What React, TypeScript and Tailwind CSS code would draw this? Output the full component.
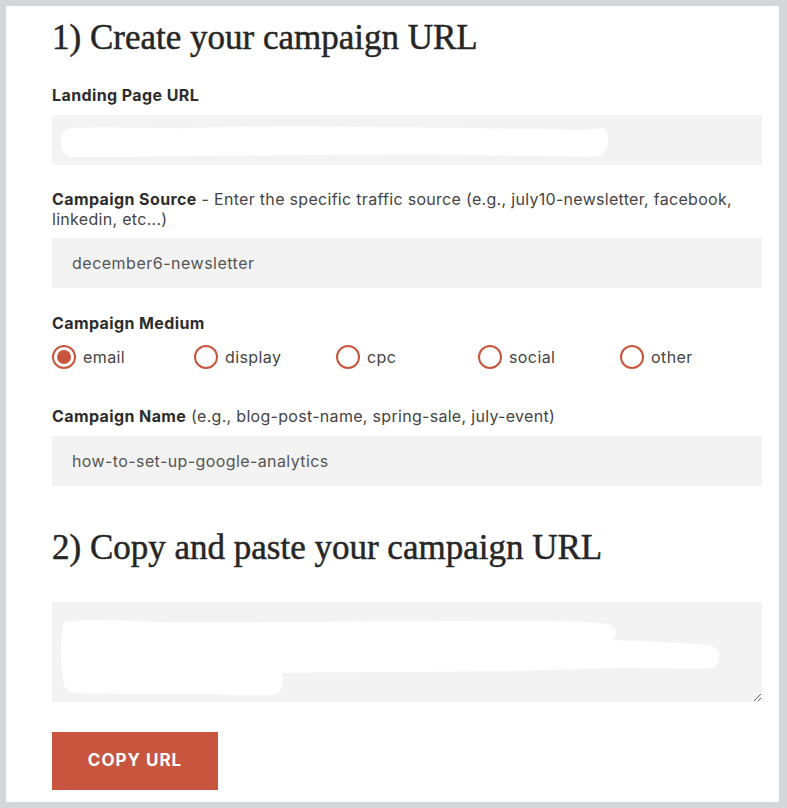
import React from "react";

const serif = { fontFamily: '"Liberation Serif", "DejaVu Serif", serif' };
const sans = { fontFamily: 'Inter, "Open Sans", sans-serif' };

function Label({ bold, rest }: { bold: string; rest?: string }) {
  return (
    <div className="text-[16px] leading-[20px] text-[#444]" style={sans}>
      <span className="font-bold tracking-[0.4px] text-[#2d2d2d]">{bold}</span>
      {rest ? <span className="font-normal tracking-[0.3px]">{rest}</span> : null}
    </div>
  );
}

function Radio({ label, checked }: { label: string; checked?: boolean }) {
  return (
    <div className="flex items-center gap-[7px]">
      <span className="flex h-[24px] w-[24px] items-center justify-center rounded-full border-2 border-[#c8553d] bg-white">
        {checked ? <span className="h-[14px] w-[14px] rounded-full bg-[#c8553d]" /> : null}
      </span>
      <span className="text-[16px] leading-[20px] tracking-[0.4px] text-[#444]" style={sans}>{label}</span>
    </div>
  );
}

export default function App() {
  return (
    <div className="min-h-[808px] w-full bg-[#d4d7da] pb-[6px] pl-[6px] pr-[8px] pt-[6px]">
      <div className="bg-white pb-[12px] pl-[46px] pr-[17px] pt-[12px]">
        <h1
          className="text-[35px] leading-[40px] text-[#262626] [-webkit-text-stroke:0.5px_#262626]"
          style={serif}
        >
          1) Create your campaign URL
        </h1>

        <div className="mt-[27px]">
          <Label bold="Landing Page URL" />
        </div>
        <div className="relative mt-[10px] h-[50px] w-full bg-[#f3f3f3]">
          <svg className="absolute left-0 top-0" width="710" height="50" viewBox="0 0 710 50">
            <path
              d="M22 13 C60 11 100 14 140 13 C200 11 260 11 300 12 C360 12 420 13 480 14 C520 15 540 15 545 14 C552 10 556 16 556 26 C556 36 550 42 540 42 C500 41 460 41 420 40 C360 39 300 40 250 40 C180 41 120 41 80 42 C50 42 30 42 18 42 C11 40 9 34 9 27 C9 19 12 13 22 13 Z"
              fill="#ffffff"
            />
          </svg>
        </div>

        <div className="mt-[24px]">
          <Label
            bold="Campaign Source"
            rest=" - Enter the specific traffic source (e.g., july10-newsletter, facebook, linkedin, etc...)"
          />
        </div>
        <div className="mt-[9px] flex h-[50px] w-full items-center bg-[#f3f3f3] px-[20px] text-[16px] tracking-[0.5px] text-[#555]" style={sans}>
          december6-newsletter
        </div>

        <div className="mt-[25px]">
          <Label bold="Campaign Medium" />
        </div>
        <div className="mt-[12px] grid grid-cols-5">
          <Radio label="email" checked />
          <Radio label="display" />
          <Radio label="cpc" />
          <Radio label="social" />
          <Radio label="other" />
        </div>

        <div className="mt-[37px]">
          <Label bold="Campaign Name" rest=" (e.g., blog-post-name, spring-sale, july-event)" />
        </div>
        <div className="mt-[10px] flex h-[50px] w-full items-center bg-[#f3f3f3] px-[20px] text-[16px] tracking-[0.4px] text-[#555]" style={sans}>
          how-to-set-up-google-analytics
        </div>

        <h2
          className="mt-[42px] text-[35px] leading-[40px] text-[#262626] [-webkit-text-stroke:0.5px_#262626]"
          style={serif}
        >
          2) Copy and paste your campaign URL
        </h2>

        <div className="relative mt-[34px]">
          <textarea
            readOnly
            className="block h-[100px] w-full resize-y bg-[#f3f3f3] outline-none"
            defaultValue=""
          />
          <svg className="pointer-events-none absolute left-0 top-0" width="710" height="100" viewBox="0 0 710 100">
            <path
              d="M14 20 C30 17 60 18 100 20 C200 21 320 19 420 19 C480 18 540 19 556 22 C566 26 566 34 560 38 C600 40 640 40 660 44 C670 48 670 62 660 66 C640 68 600 66 570 66 C500 68 420 70 360 70 C320 70 280 70 230 71 C232 78 232 88 222 93 C200 94 170 92 140 92 C100 92 60 92 20 91 C12 88 11 80 10 70 C9 55 9 40 10 30 C10 24 11 21 14 20 Z"
              fill="#ffffff"
            />
          </svg>
        </div>

        <button
          className="mt-[30px] flex h-[58px] w-[166px] items-center justify-center bg-[#c8553d] text-[17px] font-bold uppercase tracking-[1px] text-white"
          style={sans}
        >
          Copy URL
        </button>
      </div>
    </div>
  );
}
